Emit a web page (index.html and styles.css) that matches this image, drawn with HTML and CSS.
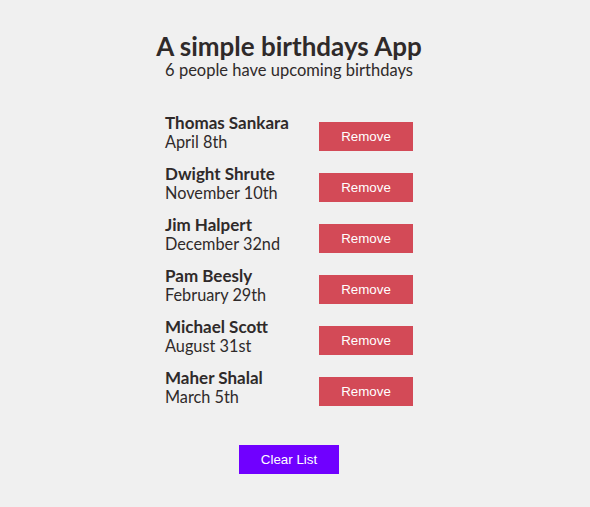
FILE: index.html
```html
<!DOCTYPE html>
<html>
<head>
<meta charset="utf-8">
<link rel="stylesheet" href="styles.css">
</head>
<body>
<main class="app">
  <h1 class="title">A simple birthdays App</h1>
  <p class="subtitle">6 people have upcoming birthdays</p>
  <ul class="list">
    <li class="row"><div class="person"><div class="name">Thomas Sankara</div><div class="date">April 8th</div></div><button class="remove">Remove</button></li>
    <li class="row"><div class="person"><div class="name">Dwight Shrute</div><div class="date">November 10th</div></div><button class="remove">Remove</button></li>
    <li class="row"><div class="person"><div class="name">Jim Halpert</div><div class="date">December 32nd</div></div><button class="remove">Remove</button></li>
    <li class="row"><div class="person"><div class="name">Pam Beesly</div><div class="date">February 29th</div></div><button class="remove">Remove</button></li>
    <li class="row"><div class="person"><div class="name">Michael Scott</div><div class="date">August 31st</div></div><button class="remove">Remove</button></li>
    <li class="row"><div class="person"><div class="name">Maher Shalal</div><div class="date">March 5th</div></div><button class="remove">Remove</button></li>
  </ul>
  <button class="clear">Clear List</button>
</main>
</body>
</html>
```
FILE: styles.css
```css
html, body { margin: 0; padding: 0; }
body {
  background: #f0f0f0;
  color: #2f2a2a;
  font-family: "Lato", "Noto Sans", sans-serif;
  padding-right: 12px;
}
.app {
  display: flex;
  flex-direction: column;
  align-items: center;
  padding-top: 32px;
}
.title {
  margin: 0;
  font-size: 26px;
  font-weight: 700;
  line-height: 28px;
}
.subtitle {
  margin: 0;
  font-size: 16.5px;
  line-height: 20px;
}
.list {
  list-style: none;
  margin: 33px 0 0;
  padding: 0;
  width: 248px;
  display: flex;
  flex-direction: column;
  gap: 13px;
}
.row {
  display: flex;
  justify-content: space-between;
  align-items: center;
}
.person { line-height: 18.5px; font-size: 16.3px; padding-top: 1px; }
.name { font-weight: 700; font-size: 17px; }
.remove, .clear {
  border: none;
  color: #fff;
  font-family: "Liberation Sans", Arial, sans-serif;
  font-size: 13.33px;
  height: 29px;
  padding: 0;
  margin-top: 8px;
}
.remove { background: #d34a57; width: 94px; }
.clear { background: #7000ff; width: 100px; margin-top: 39px; }
```
